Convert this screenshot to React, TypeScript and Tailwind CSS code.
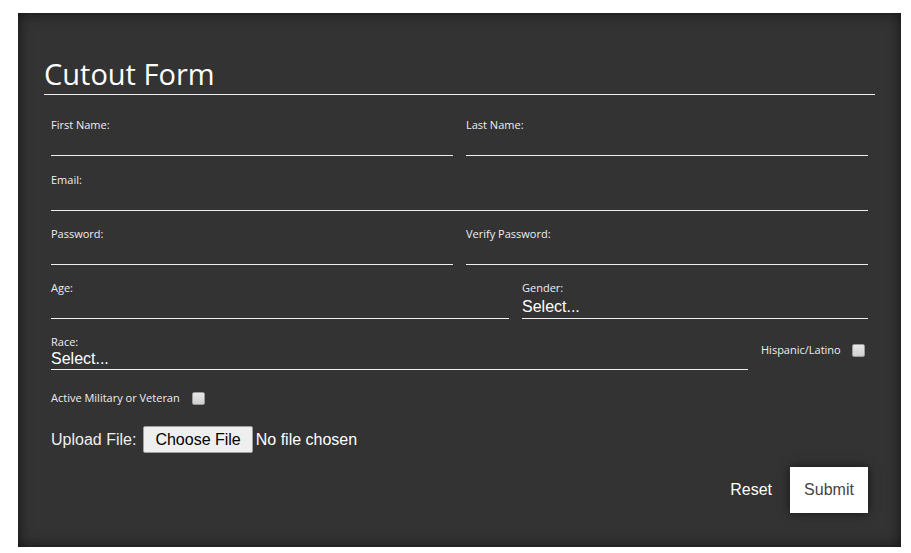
import React from 'react';

const openSans = { fontFamily: '"Open Sans", "Noto Sans", sans-serif' };
const arial = { fontFamily: '"Liberation Sans", Arial, sans-serif' };

function Field({ label, className = '' }: { label: string; className?: string }) {
  return (
    <div className={className}>
      <label className="block text-[11px] leading-[15px] text-[#eee]" style={openSans}>
        {label}
      </label>
      <div className="h-[24px] border-b border-[#eee]" />
    </div>
  );
}

function SelectField({
  label,
  className = '',
  inputHeight = 'h-[24px] leading-[23px]',
}: {
  label: string;
  className?: string;
  inputHeight?: string;
}) {
  return (
    <div className={className}>
      <label className="block text-[11px] leading-[15px] text-[#eee]" style={openSans}>
        {label}
      </label>
      <div className={`${inputHeight} border-b border-[#eee] text-[16px] text-white`} style={arial}>
        Select...
      </div>
    </div>
  );
}

function Checkbox() {
  return (
    <span className="inline-block h-[13px] w-[13px] rounded-[2px] border border-[#9a9a9a] bg-gradient-to-b from-[#e8e8e8] to-[#cfcfcf]" />
  );
}

export default function App() {
  return (
    <div className="min-h-[553px] bg-white pl-[18px] pt-[13px]">
      <div className="h-[534px] w-[883px] bg-[#333] px-[26px] pt-[41px] shadow-[inset_0_0_14px_rgba(0,0,0,0.65)]">
        <h2
          className="h-[41px] border-b border-[#eee] text-[29px] font-medium leading-[40px] text-white"
          style={openSans}
        >
          Cutout Form
        </h2>

        <form className="px-[7px]" onSubmit={(e) => e.preventDefault()}>
          <div className="mt-[22px] flex gap-[13px]">
            <Field label="First Name:" className="flex-1" />
            <Field label="Last Name:" className="flex-1" />
          </div>

          <Field label="Email:" className="mt-[16px]" />

          <div className="mt-[15px] flex gap-[13px]">
            <Field label="Password:" className="flex-1" />
            <Field label="Verify Password:" className="flex-1" />
          </div>

          <div className="mt-[15px] flex gap-[13px]">
            <Field label="Age:" className="w-[458px]" />
            <SelectField label="Gender:" className="flex-1" />
          </div>

          <div className="mt-[15px] flex items-start">
            <SelectField label="Race:" className="w-[697px]" inputHeight="h-[21px] leading-[20px]" />
            <div className="ml-[13px] mt-[9px] flex h-[14px] items-center">
              <span className="text-[11px] leading-[14px] text-[#eee]" style={openSans}>
                Hispanic/Latino
              </span>
              <span className="ml-[11px] flex">
                <Checkbox />
              </span>
            </div>
          </div>

          <div className="mt-[21px] flex h-[14px] items-center">
            <span className="text-[11px] leading-[14px] text-[#eee]" style={openSans}>
              Active Military or Veteran
            </span>
            <span className="ml-[12px] flex">
              <Checkbox />
            </span>
          </div>

          <div className="mt-[21px] flex h-[27px] items-center text-[16px] text-[#eee]" style={arial}>
            <span>Upload File:</span>
            <span className="ml-[7px] flex h-[27px] items-center rounded-[2px] border border-[#a0a0a0] bg-[#efefef] px-[11px] text-black">
              Choose File
            </span>
            <span className="ml-[3px] text-white">No file chosen</span>
          </div>

          <div className="mt-[14px] flex items-center justify-end" style={arial}>
            <button type="reset" className="mr-[18px] text-[16px] text-white">
              Reset
            </button>
            <button
              type="submit"
              className="h-[46px] w-[78px] bg-white text-[16px] text-[#444] shadow-[0_0_10px_rgba(0,0,0,0.6)]"
            >
              Submit
            </button>
          </div>
        </form>
      </div>
    </div>
  );
}
